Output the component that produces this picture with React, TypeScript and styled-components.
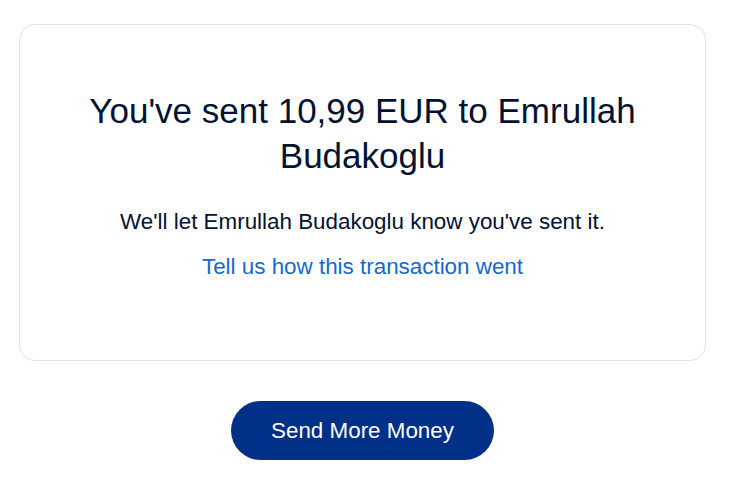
import React from "react";
import styled, { createGlobalStyle } from "styled-components";

const Global = createGlobalStyle`
  html, body { margin: 0; padding: 0; background: #fff; }
  body { font-family: "Liberation Sans", Arial, sans-serif; }
`;

const Page = styled.div`
  display: flex;
  flex-direction: column;
  align-items: center;
  padding: 24px 32px 0 19px;
`;

const Card = styled.section`
  box-sizing: border-box;
  width: 687px;
  height: 337px;
  border: 1px solid #e3e3e3;
  border-radius: 16px;
  display: flex;
  flex-direction: column;
  align-items: center;
  padding: 63px 40px 0;
  text-align: center;
`;

const Title = styled.h1`
  margin: 0;
  font-size: 35px;
  font-weight: 400;
  line-height: 45px;
  color: #031232;
  max-width: 580px;
`;

const Message = styled.p`
  margin: 30px 0 0;
  font-size: 22.4px;
  line-height: 28px;
  color: #031232;
`;

const FeedbackLink = styled.a`
  margin-top: 17px;
  font-size: 22.4px;
  line-height: 28px;
  color: #1469d0;
  text-decoration: none;
  cursor: pointer;
`;

const PrimaryButton = styled.button`
  margin-top: 40px;
  width: 263px;
  height: 59px;
  border: none;
  border-radius: 30px;
  background: #003087;
  color: #fff;
  font-family: "Liberation Sans", Arial, sans-serif;
  font-size: 22.4px;
  cursor: pointer;
`;

export default function App() {
  return (
    <>
      <Global />
      <Page>
        <Card>
          <Title>You've sent 10,99 EUR to Emrullah Budakoglu</Title>
          <Message>We'll let Emrullah Budakoglu know you've sent it.</Message>
          <FeedbackLink>Tell us how this transaction went</FeedbackLink>
        </Card>
        <PrimaryButton>Send More Money</PrimaryButton>
      </Page>
    </>
  );
}
